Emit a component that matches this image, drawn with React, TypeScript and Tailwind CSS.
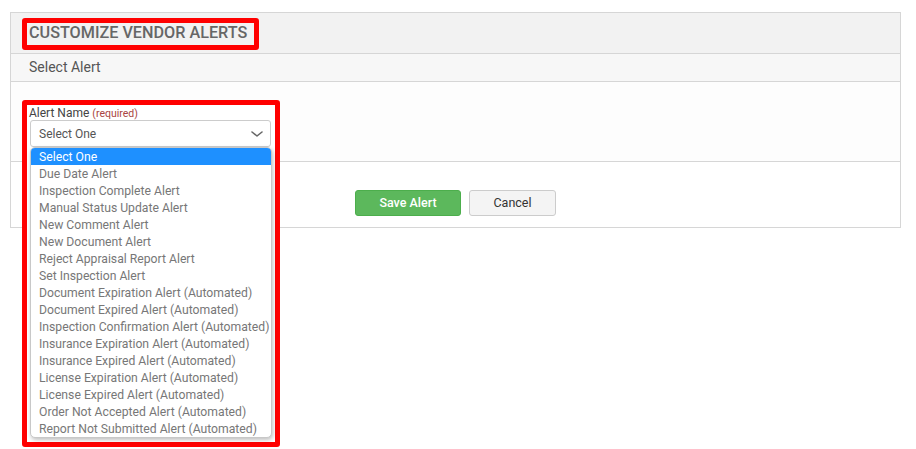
import React from "react";

const items = [
  "Due Date Alert",
  "Inspection Complete Alert",
  "Manual Status Update Alert",
  "New Comment Alert",
  "New Document Alert",
  "Reject Appraisal Report Alert",
  "Set Inspection Alert",
  "Document Expiration Alert (Automated)",
  "Document Expired Alert (Automated)",
  "Inspection Confirmation Alert (Automated)",
  "Insurance Expiration Alert (Automated)",
  "Insurance Expired Alert (Automated)",
  "License Expiration Alert (Automated)",
  "License Expired Alert (Automated)",
  "Order Not Accepted Alert (Automated)",
  "Report Not Submitted Alert (Automated)",
];

function Chevron() {
  return (
    <svg width="16" height="16" viewBox="0 0 16 16" fill="none">
      <path d="M3 6l5 4 5-4" stroke="#666" strokeWidth="1.6" strokeLinecap="round" strokeLinejoin="round" />
    </svg>
  );
}

export default function App() {
  return (
    <div className="relative w-[916px] h-[449px] overflow-hidden bg-white font-['Roboto',sans-serif]">
      <div className="ml-[10px] mt-[12px] w-[891px] border border-[#d6d6d6]">
        <div className="h-[41px] bg-[#f2f2f2] border-b border-[#d6d6d6] flex items-center pl-[18px] pt-[1px]">
          <span className="text-[16.2px] font-medium text-[#666]">CUSTOMIZE VENDOR ALERTS</span>
        </div>
        <div className="h-[28px] bg-[#f7f7f7] border-b border-[#d6d6d6] flex items-center pl-[18px]">
          <span className="text-[14px] text-[#555]">Select Alert</span>
        </div>
        <div className="h-[80px] bg-[#fdfdfd] border-b border-[#d6d6d6]" />
        <div className="h-[65px] bg-white flex items-start pt-[28px] pl-[344px] gap-[8px]">
          <button className="w-[106px] h-[26px] rounded-[3px] bg-[#5cb85c] border border-[#4cae4c] text-white text-[12.5px] font-medium">Save Alert</button>
          <button className="w-[87px] h-[26px] rounded-[3px] bg-[#f4f4f4] border border-[#ccc] text-[#333] text-[12.5px]">Cancel</button>
        </div>
      </div>

      {/* annotation box 2 (overlay with open dropdown) */}
      <div className="absolute left-[22px] top-[100px] w-[258px] h-[347px] border-[5px] border-[#ff0000] rounded-[3px] bg-white flex flex-col pl-[3px] pt-[2px]">
        <div className="pl-[-1px] text-[12px] leading-[13px] text-[#444] whitespace-nowrap -ml-[1px]">
          Alert Name <span className="text-[10.5px] text-[#a94442]">(required)</span>
        </div>
        <div className="w-[241px] h-[27px] border border-[#ccc] rounded-[3px] bg-white flex items-center justify-between pl-[8px] pr-[5px]">
          <span className="text-[12px] text-[#555]">Select One</span>
          <Chevron />
        </div>
        <div className="w-[242px] h-[291px] rounded-[5px] bg-white border border-[#c8c8c8] shadow-[1px_2px_4px_rgba(0,0,0,0.25)] overflow-hidden flex flex-col">
          <div className="h-[17px] bg-[#1e90ff] text-white text-[12.2px] leading-[18px] pl-[8px]">Select One</div>
          {items.map((t) => (
            <div key={t} className="h-[17px] text-[#777] text-[12.2px] leading-[18px] pl-[8px] whitespace-nowrap">{t}</div>
          ))}
        </div>
      </div>

      {/* annotation box 1 */}
      <div className="absolute left-[22px] top-[18px] w-[237px] h-[32px] border-[5px] border-[#ff0000] rounded-[3px]" />
    </div>
  );
}
